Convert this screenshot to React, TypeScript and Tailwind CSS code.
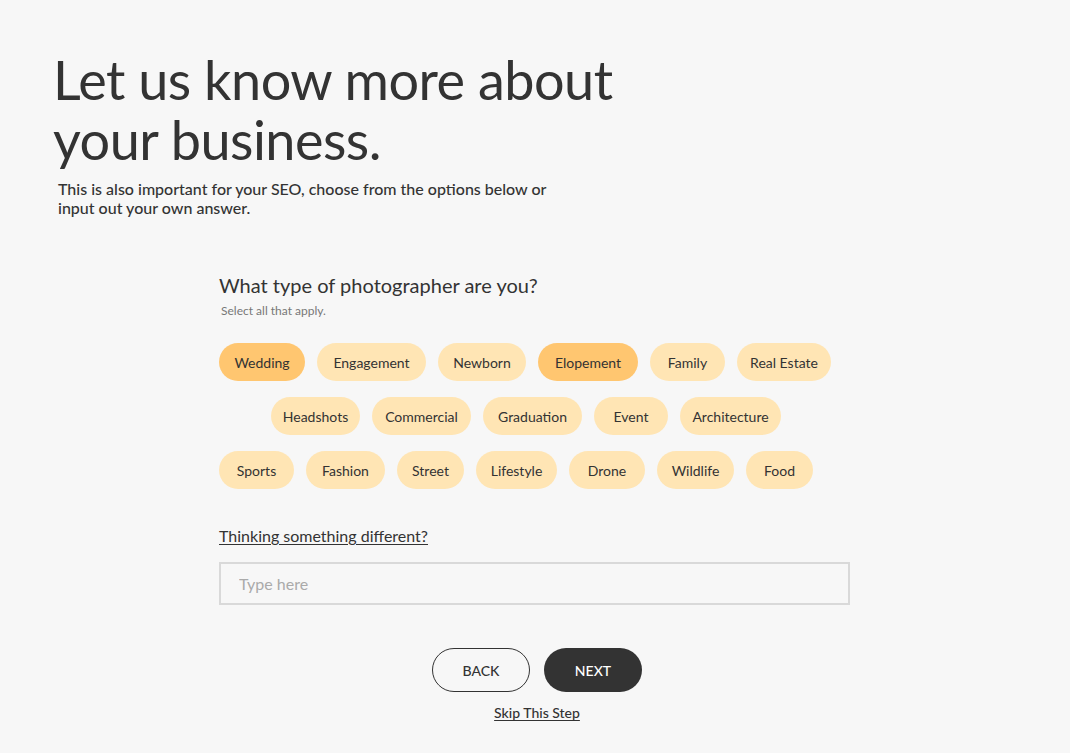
import React, { useState } from 'react';

const rows: { label: string; w: number }[][] = [
  [
    { label: 'Wedding', w: 86 },
    { label: 'Engagement', w: 109 },
    { label: 'Newborn', w: 88 },
    { label: 'Elopement', w: 100 },
    { label: 'Family', w: 75 },
    { label: 'Real Estate', w: 94 },
  ],
  [
    { label: 'Headshots', w: 89 },
    { label: 'Commercial', w: 99 },
    { label: 'Graduation', w: 99 },
    { label: 'Event', w: 74 },
    { label: 'Architecture', w: 101 },
  ],
  [
    { label: 'Sports', w: 75 },
    { label: 'Fashion', w: 79 },
    { label: 'Street', w: 67 },
    { label: 'Lifestyle', w: 81 },
    { label: 'Drone', w: 76 },
    { label: 'Wildlife', w: 77 },
    { label: 'Food', w: 67 },
  ],
];

export default function App() {
  const [selected, setSelected] = useState<string[]>(['Wedding', 'Elopement']);
  const [other, setOther] = useState('');

  const toggle = (label: string) => {
    setSelected((prev) =>
      prev.includes(label) ? prev.filter((l) => l !== label) : [...prev, label]
    );
  };

  return (
    <div className="min-h-[753px] bg-[#f7f7f7] text-[#333] font-['Lato',sans-serif]">
      {/* Header */}
      <div className="pl-[53px] pt-[50px]">
        <h1 className="text-[54px] leading-[60px] font-normal tracking-[-0.5px] w-[600px]">
          Let us know more about your business.
        </h1>
        <p className="ml-[5px] mt-[9px] w-[515px] text-[16px] leading-[19px] font-medium">
          This is also important for your SEO, choose from the options below or input out your own answer.
        </p>
      </div>

      {/* Question */}
      <div className="ml-[219px] mt-[55px] w-[631px]">
        <h2 className="text-[20px] leading-[26px]">What type of photographer are you?</h2>
        <p className="ml-[2px] mt-[6px] text-[12px] leading-[14px] text-[#777]">Select all that apply.</p>

        <div className="mt-[25px] w-[614px] flex flex-col gap-4">
          {rows.map((row, i) => (
            <div key={i} className={`flex gap-3 ${i === 1 ? 'justify-center' : 'justify-start'}`}>
              {row.map((chip) => {
                const on = selected.includes(chip.label);
                return (
                  <button
                    key={chip.label}
                    onClick={() => toggle(chip.label)}
                    style={{ width: chip.w }}
                    className={`h-[38px] rounded-full text-[14px] text-[#333] whitespace-nowrap ${
                      on ? 'bg-[#ffc670]' : 'bg-[#ffe5b4]'
                    }`}
                  >
                    {chip.label}
                  </button>
                );
              })}
            </div>
          ))}
        </div>

        <p className="mt-[37px] text-[16px] leading-[20px] underline underline-offset-2">
          Thinking something different?
        </p>
        <input
          type="text"
          value={other}
          onChange={(e) => setOther(e.target.value)}
          placeholder="Type here"
          className="mt-[16px] w-[631px] h-[43px] border-2 border-[#d9d9d9] bg-transparent px-[18px] text-[16px] placeholder:text-[#aaa] outline-none"
        />
      </div>

      {/* Actions */}
      <div className="mt-[43px] ml-[432px] w-[210px] flex flex-col items-center">
        <div className="flex gap-[14px]">
          <button className="w-[98px] h-[44px] rounded-full border-[1.5px] border-[#333] text-[14px] font-medium">
            BACK
          </button>
          <button className="w-[98px] h-[44px] rounded-full bg-[#333] text-white text-[14px] font-medium">
            NEXT
          </button>
        </div>
        <a href="#" className="mt-[10px] text-[14px] font-medium underline underline-offset-2">
          Skip This Step
        </a>
      </div>
    </div>
  );
}
